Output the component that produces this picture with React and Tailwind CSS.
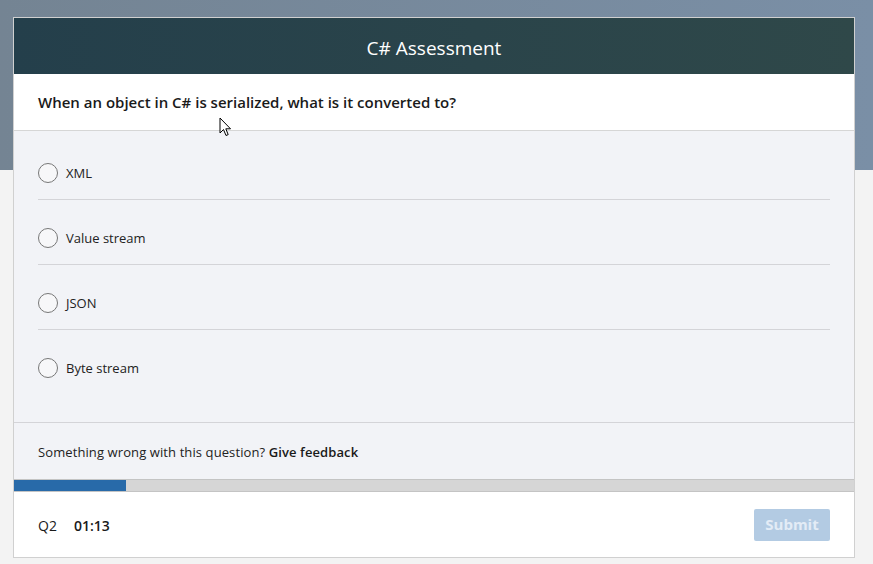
export default function App() {
  const options = ["XML", "Value stream", "JSON", "Byte stream"];

  return (
    <div
      className="relative min-h-[564px] w-full bg-[#f3f3f3] text-[#1f1f1f]"
      style={{ fontFamily: '"Open Sans", "Noto Sans", sans-serif' }}
    >
      {/* backdrop band */}
      <div className="absolute left-0 right-0 top-0 h-[170px] bg-gradient-to-r from-[#748493] to-[#7a8fa6]" />

      <div className="relative px-[13px] pt-[17px]">
        <div className="mr-[5px] border border-[#d0d0d0] bg-white">
          {/* header */}
          <div className="flex h-[56px] items-center justify-center bg-gradient-to-r from-[#243f4b] to-[#2f4849] pt-[4px]">
            <h1 className="text-[19px] text-white">C# Assessment</h1>
          </div>

          {/* question */}
          <div className="flex h-[57px] items-center border-b border-[#d6d6d6] px-6">
            <p className="text-[15px] font-semibold text-[#1a1a1a]">
              When an object in C# is serialized, what is it converted to?
            </p>
          </div>

          {/* options */}
          <div className="bg-[#f2f3f7] px-6 pb-[27px] pt-[4px]">
            {options.map((opt, i) => (
              <div
                key={opt}
                className={`flex h-[65px] items-start gap-[8px] pt-[28px] ${
                  i < options.length - 1 ? "border-b border-[#d4d4d8]" : ""
                }`}
              >
                <span className="h-[20px] w-[20px] shrink-0 rounded-full border border-[#777] bg-[#f7f7f9]" />
                <span className="text-[13px] leading-[20px] text-[#222]">{opt}</span>
              </div>
            ))}
          </div>

          {/* feedback */}
          <div className="flex h-[57px] items-center border-t border-[#d4d4d8] bg-[#f2f3f7] px-6 pt-[4px] text-[13px] tracking-[0.1px] text-[#222]">
            Something wrong with this question?&nbsp;
            <span className="font-semibold text-[#1a1a1a]">Give feedback</span>
          </div>

          {/* progress */}
          <div className="flex h-[13px] border-y border-[#c4c4c4] bg-[#d6d6d6]">
            <div className="w-[112px] bg-[#286aa9]" />
          </div>

          {/* footer */}
          <div className="flex h-[65px] items-center justify-between px-6">
            <div className="flex items-center gap-[17px] pt-[2px] text-[14px] text-[#1a1a1a]">
              <span>Q2</span>
              <span className="font-semibold">01:13</span>
            </div>
            <button className="h-[32px] w-[76px] rounded-[2px] bg-[#b3cbe3] text-[15px] font-bold text-[#e3ecf6]">
              Submit
            </button>
          </div>
        </div>
      </div>

      {/* mouse pointer */}
      <svg className="absolute left-[219px] top-[117px]" width="13" height="20" viewBox="0 0 13 20">
        <path d="M1 1 L1 16 L4.5 12.5 L7 18.5 L9.2 17.6 L6.8 11.8 L11.5 11.8 Z" fill="white" stroke="black" strokeWidth="1" strokeLinejoin="round" />
      </svg>
    </div>
  );
}
